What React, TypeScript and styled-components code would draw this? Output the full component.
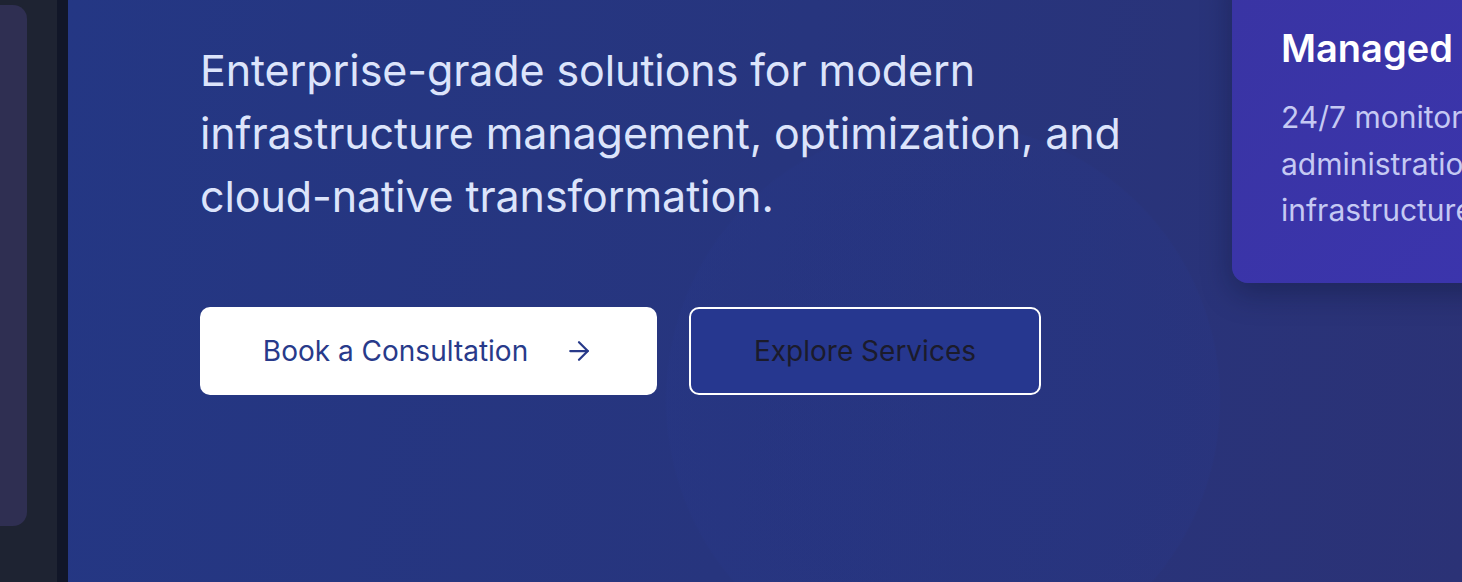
import styled, { createGlobalStyle } from 'styled-components'

const GlobalStyle = createGlobalStyle`
    html, body {
        margin: 0;
        padding: 0;
        height: 100%;
        overflow: hidden;
        background: #1e2332;
    }
    #root {
        height: 100%;
    }
    * {
        box-sizing: border-box;
    }
`

const Page = styled.div`
    display: flex;
    height: 582px;
    width: 1462px;
    font-family: Inter, "Noto Sans", sans-serif;
`

const Sidebar = styled.aside`
    width: 57px;
    flex-shrink: 0;
    background: #1e2332;
    padding: 5px 30px 56px 0;
    display: flex;
`

const SidebarCard = styled.div`
    flex: 1;
    background: #2f2f52;
    border-radius: 0 14px 14px 0;
`

const Divider = styled.div`
    width: 11px;
    flex-shrink: 0;
    background: #111628;
`

const Hero = styled.main`
    flex: 1;
    position: relative;
    overflow: hidden;
    background:
        radial-gradient(circle at 875px 400px, rgba(38, 54, 135, 0.45) 0, rgba(38, 54, 135, 0.35) 200px, rgba(40, 56, 138, 0.25) 276px, transparent 278px),
        linear-gradient(100deg, #243784 0%, #27357e 50%, #2b3276 100%);
    display: grid;
    grid-template-columns: 1000px 1fr;
    column-gap: 32px;
    padding-left: 132px;
`

const Intro = styled.div`
    padding-top: 39px;
    display: flex;
    flex-direction: column;
`

const Lead = styled.p`
    margin: 0;
    font-size: 43px;
    line-height: 63px;
    font-weight: 400;
    letter-spacing: -0.1px;
    color: #dce4fb;
    max-width: 960px;
`

const Actions = styled.div`
    display: flex;
    gap: 32px;
    margin-top: 79px;
`

const Button = styled.button<{ $outline?: boolean }>`
    height: 88px;
    border-radius: 10px;
    font-family: inherit;
    font-size: 28px;
    display: flex;
    align-items: center;
    justify-content: center;
    gap: 36px;
    cursor: pointer;
    ${({ $outline }) => $outline ? `
        width: 352px;
        background: #26378f;
        border: 2px solid #ffffff;
        color: #1b1b2b;
    ` : `
        width: 457px;
        background: #ffffff;
        border: none;
        color: #283a8a;
    `}
`

const ServiceCard = styled.div`
    margin-top: -40px;
    height: 323px;
    width: 480px;
    background: linear-gradient(135deg, #3934a3 0%, #3c35b0 100%);
    border-radius: 16px;
    box-shadow: 0 10px 30px rgba(10, 14, 40, 0.35);
    padding: 66px 48px 0 49px;
`

const CardTitle = styled.h3`
    margin: 0 0 24px;
    font-size: 38px;
    font-weight: 600;
    color: #ffffff;
    white-space: nowrap;
    line-height: 44px;
`

const CardText = styled.p`
    margin: 0;
    font-size: 30px;
    line-height: 46.5px;
    color: #c5c9f3;
    width: 330px;
`

const Arrow = () => (
    <svg width="30" height="30" viewBox="0 0 24 24" fill="none" stroke="currentColor" strokeWidth="1.8" strokeLinecap="round" strokeLinejoin="round">
        <path d="M5 12h14" />
        <path d="M12 5l7 7-7 7" />
    </svg>
)

export default function App() {
    return (
        <>
            <GlobalStyle />
            <Page>
                <Sidebar>
                    <SidebarCard />
                </Sidebar>
                <Divider />
                <Hero>
                    <Intro>
                        <Lead>
                            Enterprise-grade solutions for modern infrastructure management, optimization, and cloud-native transformation.
                        </Lead>
                        <Actions>
                            <Button>
                                Book a Consultation
                                <Arrow />
                            </Button>
                            <Button $outline>Explore Services</Button>
                        </Actions>
                    </Intro>
                    <ServiceCard>
                        <CardTitle>Managed Services</CardTitle>
                        <CardText>24/7 monitoring and administration of your infrastructure.</CardText>
                    </ServiceCard>
                </Hero>
            </Page>
        </>
    )
}
